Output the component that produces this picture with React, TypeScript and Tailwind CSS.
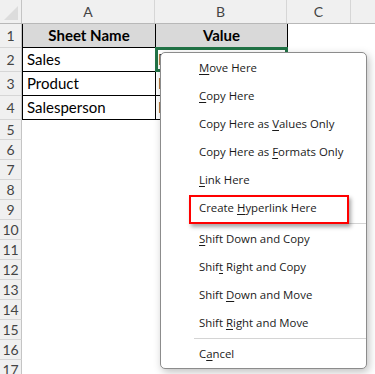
import React from "react";

const rowsTop = [
  { n: 1, h: 24 },
  { n: 2, h: 24 },
  { n: 3, h: 24 },
  { n: 4, h: 24 },
];
const rowsRest = Array.from({ length: 13 }, (_, i) => i + 5);

type Item = { pre: string; key: string; post: string };
const group1: Item[] = [
  { pre: "", key: "M", post: "ove Here" },
  { pre: "", key: "C", post: "opy Here" },
  { pre: "Copy Here as ", key: "V", post: "alues Only" },
  { pre: "Copy Here as ", key: "F", post: "ormats Only" },
  { pre: "", key: "L", post: "ink Here" },
  { pre: "Create ", key: "H", post: "yperlink Here" },
];
const group2: Item[] = [
  { pre: "", key: "S", post: "hift Down and Copy" },
  { pre: "Shif", key: "t", post: " Right and Copy" },
  { pre: "Shift ", key: "D", post: "own and Move" },
  { pre: "Shift ", key: "R", post: "ight and Move" },
];

function MenuItem({ item, boxed }: { item: Item; boxed?: boolean }) {
  return (
    <div className="relative flex h-[28px] items-center pl-[38px] text-[11.4px] text-[#1a1a1a]">
      {boxed && (
        <div className="absolute left-[28px] top-[1px] h-[29px] w-[160px] border-2 border-[#ff0000] shadow-[2px_3px_4px_rgba(0,0,0,0.35)]" />
      )}
      <span className="relative whitespace-pre">
        {item.pre}
        <span className="underline underline-offset-2">{item.key}</span>
        {item.post}
      </span>
    </div>
  );
}

export default function App() {
  const cellFont = { fontFamily: "Lato, 'Open Sans', sans-serif" };
  return (
    <div className="relative h-[374px] w-[375px] overflow-hidden bg-white" style={cellFont}>
      {/* Column header */}
      <div className="flex h-[24px] border-b border-[#b8b8b8] bg-[#f0f0f0] text-[14px] text-[#444]">
        <div className="relative w-[22px] border-r border-[#c4c4c4]">
          <svg className="absolute right-[3px] bottom-[3px]" width="14" height="14" viewBox="0 0 14 14">
            <polygon points="14,0 14,14 0,14" fill="#dcdcdc" />
          </svg>
        </div>
        <div className="flex w-[133px] items-center justify-center border-r border-[#d6d6d6]">A</div>
        <div className="flex w-[132px] items-center justify-center border-r border-[#d6d6d6]">B</div>
        <div className="flex w-[64px] items-center justify-center border-r border-[#d6d6d6]">C</div>
        <div className="flex-1" />
      </div>

      {/* Top rows */}
      {rowsTop.map((r) => (
        <div key={r.n} className="flex h-[24px]">
          <div className="flex w-[22px] items-center justify-center border-b border-r border-[#d6d6d6] border-r-[#c4c4c4] bg-[#f0f0f0] text-[14px] text-[#444]">
            {r.n}
          </div>
          {r.n === 1 ? (
            <>
              <div className="flex w-[133px] items-center justify-center border-b border-l border-[#000] bg-[#d9d9d9] text-[15px] font-bold text-black">
                Sheet Name
              </div>
              <div className="flex w-[133px] items-center justify-center border-x border-b border-[#000] bg-[#d9d9d9] text-[15px] font-bold text-black">
                Value
              </div>
            </>
          ) : (
            <>
              <div className="flex w-[133px] items-center border-b border-l border-[#000] pl-[4px] text-[15px] text-black">
                {r.n === 2 ? "Sales" : r.n === 3 ? "Product" : "Salesperson"}
              </div>
              <div className="relative flex w-[133px] items-center border-x border-b border-[#000] pl-[2px] text-[15px] text-[#333]">
                {r.n === 2 && (
                  <div className="absolute -left-[1px] -top-[1px] h-[25px] w-[133px] border-[3px] border-[#217346]" />
                )}
                <span>Data</span>
              </div>
            </>
          )}
          <div className="flex-1" />
        </div>
      ))}

      {/* Remaining rows */}
      {rowsRest.map((n) => (
        <div key={n} className="flex h-[20px]">
          <div className="flex w-[22px] items-center justify-center border-b border-r border-[#d6d6d6] border-r-[#c4c4c4] bg-[#f0f0f0] text-[14px] text-[#444]">
            {n}
          </div>
          <div className="flex-1" />
        </div>
      ))}

      {/* Context menu */}
      <div
        className="absolute left-[160px] top-[52px] h-[317px] w-[207px] rounded-[5px] border border-[#8c8c8c] bg-white pt-[1px] shadow-[2px_3px_8px_rgba(0,0,0,0.25)]"
        style={{ fontFamily: "'Open Sans', 'Noto Sans', sans-serif" }}
      >
        {group1.map((it, i) => (
          <MenuItem key={i} item={it} boxed={i === 5} />
        ))}
        <div className="my-[1px] ml-[33px] h-px bg-[#d4d4d4]" />
        {group2.map((it, i) => (
          <MenuItem key={i} item={it} />
        ))}
        <div className="my-[1px] ml-[33px] h-px bg-[#d4d4d4]" />
        <MenuItem item={{ pre: "C", key: "a", post: "ncel" }} />
      </div>
    </div>
  );
}
